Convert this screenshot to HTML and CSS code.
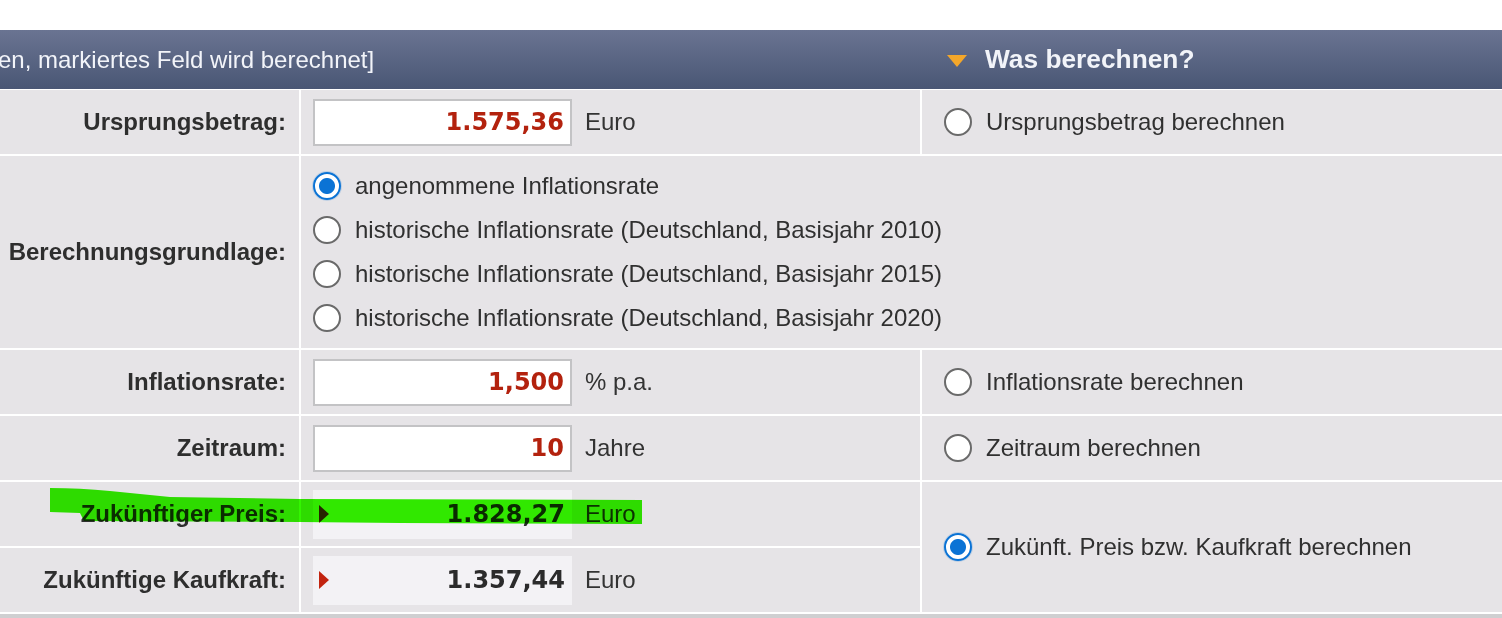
FILE: index.html
```html
<!DOCTYPE html>
<html lang="de">
<head>
<meta charset="utf-8">
<title>Inflationsrechner</title>
<link rel="stylesheet" href="styles.css">
</head>
<body>
<div class="page">
  <div class="head">
    <div class="head-left">en, markiertes Feld wird berechnet]</div>
    <div class="head-right"><span class="tri"></span>Was berechnen?</div>
  </div>
  <div class="grid">
    <div class="lbl">Ursprungsbetrag:</div>
    <div class="mid"><div class="field">1.575,36</div><span class="unit">Euro</span></div>
    <div class="opt"><span class="radio"></span>Ursprungsbetrag berechnen</div>

    <div class="lbl">Berechnungsgrundlage:</div>
    <div class="mid wide">
      <div class="choice"><span class="radio on"></span>angenommene Inflationsrate</div>
      <div class="choice"><span class="radio"></span>historische Inflationsrate (Deutschland, Basisjahr 2010)</div>
      <div class="choice"><span class="radio"></span>historische Inflationsrate (Deutschland, Basisjahr 2015)</div>
      <div class="choice"><span class="radio"></span>historische Inflationsrate (Deutschland, Basisjahr 2020)</div>
    </div>

    <div class="lbl">Inflationsrate:</div>
    <div class="mid"><div class="field">1,500</div><span class="unit">% p.a.</span></div>
    <div class="opt"><span class="radio"></span>Inflationsrate berechnen</div>

    <div class="lbl">Zeitraum:</div>
    <div class="mid"><div class="field">10</div><span class="unit">Jahre</span></div>
    <div class="opt"><span class="radio"></span>Zeitraum berechnen</div>

    <div class="lbl">Zukünftiger Preis:</div>
    <div class="mid"><div class="result"><span class="marker"></span>1.828,27</div><span class="unit">Euro</span></div>
    <div class="opt tall"><span class="radio on"></span>Zukünft. Preis bzw. Kaufkraft berechnen</div>

    <div class="lbl">Zukünftige Kaufkraft:</div>
    <div class="mid"><div class="result"><span class="marker"></span>1.357,44</div><span class="unit">Euro</span></div>
  </div>
  <div class="foot"></div>
  <svg class="highlight" width="1502" height="618" viewBox="0 0 1502 618" aria-hidden="true">
    <path d="M50 488 C 90 488 130 493 170 497 L 300 499 L 642 500 L 642 524 L 400 523 L 300 522 L 84 521 L 80 513 L 50 512 Z" fill="#33f500"/>
  </svg>
</div>
</body>
</html>
```

FILE: styles.css
```css
html, body {
  margin: 0;
  padding: 0;
  background: #ffffff;
}

.page {
  position: relative;
  width: 1502px;
  height: 618px;
  overflow: hidden;
  padding-top: 30px;
  box-sizing: border-box;
  font-family: "Liberation Sans", Arial, sans-serif;
  font-size: 24px;
  color: #303030;
}

.head {
  display: flex;
  height: 59px;
  background: linear-gradient(#6a7492, #495674);
  color: #f2f4f9;
  align-items: center;
}

.head-left {
  width: 920px;
  margin-left: -2px;
  white-space: nowrap;
}

.head-right {
  display: flex;
  align-items: center;
  padding-left: 29px;
  font-weight: bold;
  font-size: 26.3px;
}

.tri {
  width: 0;
  height: 0;
  border-left: 10px solid transparent;
  border-right: 10px solid transparent;
  border-top: 12px solid #f4a72a;
  margin-right: 18px;
  margin-top: 2px;
}

.grid {
  display: grid;
  grid-template-columns: 299px 619px 1fr;
  grid-template-rows: 64px 192px 64px 64px 64px 64px;
  gap: 2px;
  padding-top: 1px;
  padding-bottom: 2px;
  background: #ffffff;
}

.lbl,
.mid,
.opt {
  background: #e6e4e7;
  display: flex;
  align-items: center;
}

.lbl {
  justify-content: flex-end;
  padding-right: 13px;
  font-weight: bold;
  color: #2e2e2e;
}

.mid {
  padding-left: 12px;
}

.mid.wide {
  grid-column: span 2;
  flex-direction: column;
  align-items: flex-start;
  justify-content: flex-start;
  padding-top: 8px;
}

.choice {
  height: 44px;
  display: flex;
  align-items: center;
}

.opt {
  padding-left: 22px;
}

.opt.tall {
  grid-row: span 2;
}

.field {
  width: 259px;
  height: 47px;
  box-sizing: border-box;
  border: 2px solid #c3c3c5;
  background: #ffffff;
  display: flex;
  align-items: center;
  justify-content: flex-end;
  padding-right: 6px;
  font-family: "DejaVu Sans", Verdana, sans-serif;
  font-weight: bold;
  font-size: 24px;
  color: #b3220e;
}

.result {
  width: 259px;
  height: 49px;
  box-sizing: border-box;
  background: #f3f2f5;
  display: flex;
  align-items: center;
  justify-content: space-between;
  padding: 0 7px 0 6px;
  font-family: "DejaVu Sans", Verdana, sans-serif;
  font-weight: bold;
  font-size: 24px;
  color: #2b2b2b;
}

.marker {
  width: 0;
  height: 0;
  border-top: 9px solid transparent;
  border-bottom: 9px solid transparent;
  border-left: 10px solid #c2240f;
}

.unit {
  margin-left: 13px;
  color: #333333;
}

.radio {
  flex: none;
  width: 28px;
  height: 28px;
  box-sizing: border-box;
  border: 2px solid #6a6a6a;
  border-radius: 50%;
  background: #ffffff;
  margin-right: 14px;
}

.radio.on {
  border-color: #0b73d5;
  background: radial-gradient(circle, #0b73d5 0 7.5px, #ffffff 8.5px);
  box-shadow: 0 0 0 1px rgba(11, 115, 213, 0.18);
}

.foot {
  height: 6px;
  background: #cfcfd1;
}

.highlight {
  position: absolute;
  left: 0;
  top: 0;
  mix-blend-mode: multiply;
  pointer-events: none;
}
```
